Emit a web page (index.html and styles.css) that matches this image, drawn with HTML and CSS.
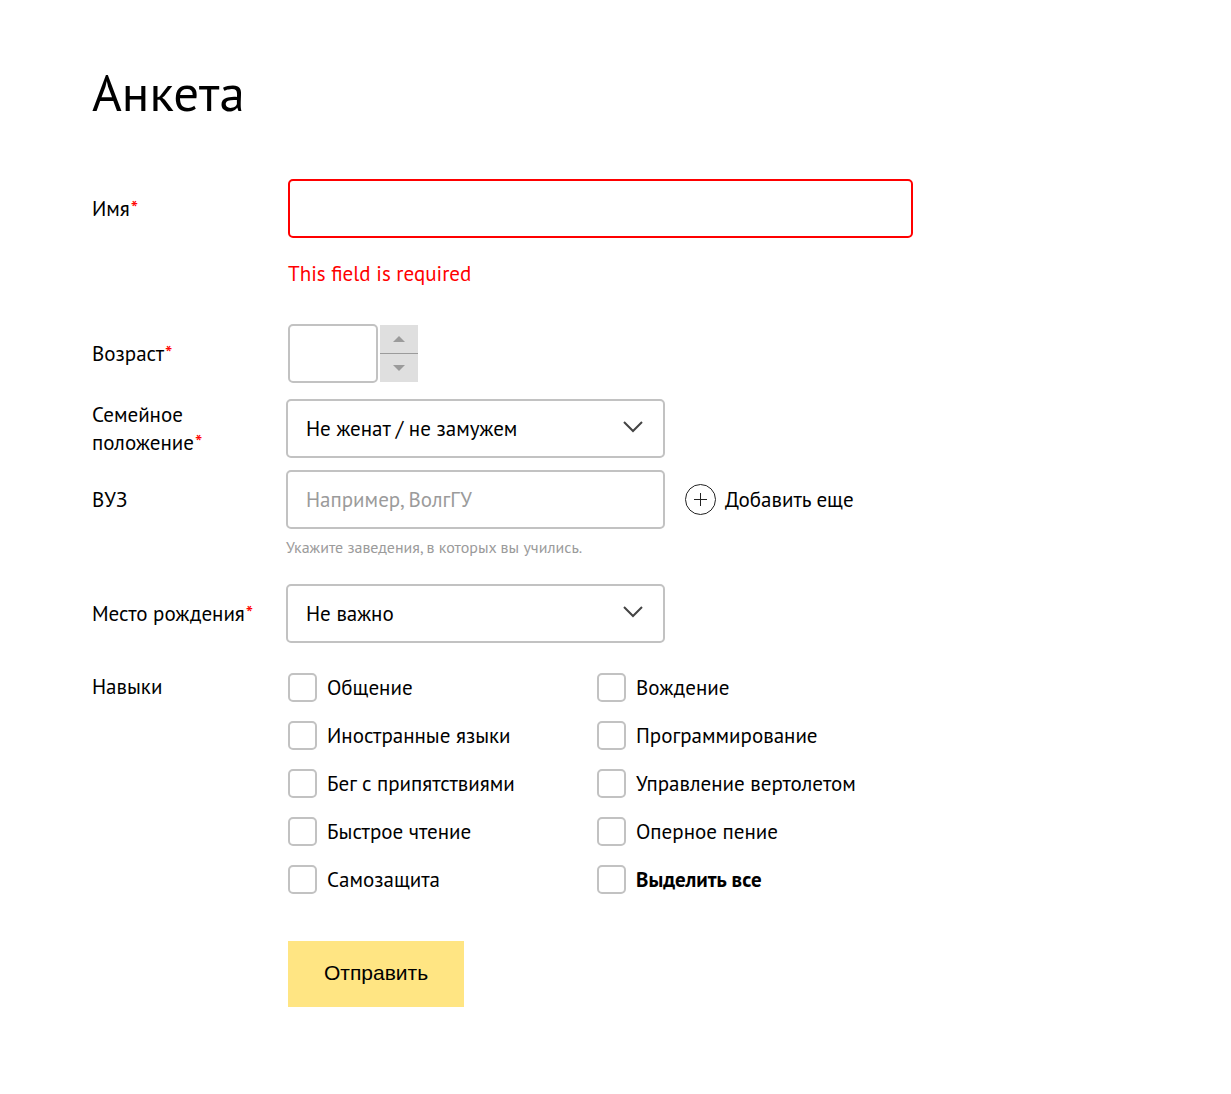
FILE: index.html
```html
<!DOCTYPE html>
<html lang="ru">
<head>
<meta charset="utf-8">
<meta name="viewport" content="width=device-width, initial-scale=1">
<title>Анкета</title>
<link rel="stylesheet" href="styles.css">
</head>
<body>
<main class="page">
  <h1 class="title">Анкета</h1>
  <form class="form" novalidate>
    <div class="row row-name">
      <label class="label" for="name">Имя<span class="required">*</span></label>
      <input class="control control-invalid" id="name" type="text" aria-describedby="name-error">
      <p class="error" id="name-error">This field is required</p>
    </div>

    <div class="row">
      <label class="label" for="age">Возраст<span class="required">*</span></label>
      <div class="stepper">
        <input class="control control-age" id="age" type="text" inputmode="numeric">
        <div class="stepper-buttons">
          <button class="step" type="button" aria-label="Увеличить"><svg class="step-icon" viewBox="0 0 12 6"><path d="M0 6L6 0L12 6Z"/></svg></button>
          <button class="step" type="button" aria-label="Уменьшить"><svg class="step-icon" viewBox="0 0 12 6"><path d="M0 0L6 6L12 0Z"/></svg></button>
        </div>
      </div>
    </div>

    <div class="row row-compact row-status">
      <label class="label" for="status">Семейное положение<span class="required">*</span></label>
      <div class="select">
        <select class="control" id="status"><option>Не женат / не замужем</option></select>
        <svg class="chevron" viewBox="0 0 20 12"><path d="M1 1L10 10L19 1"/></svg>
      </div>
    </div>

    <div class="row row-compact row-school">
      <label class="label" for="school">ВУЗ</label>
      <div class="school">
        <input class="control control-school" id="school" type="text" placeholder="Например, ВолгГУ" aria-describedby="school-hint">
        <button class="add" type="button">
          <svg class="add-icon" viewBox="0 0 31 31"><circle cx="15.5" cy="15.5" r="15"/><path d="M9 15.5H22M15.5 9V22"/></svg>
          <span>Добавить еще</span>
        </button>
      </div>
      <p class="hint" id="school-hint">Укажите заведения, в которых вы учились.</p>
    </div>

    <div class="row row-compact row-place">
      <label class="label" for="place">Место рождения<span class="required">*</span></label>
      <div class="select">
        <select class="control" id="place"><option>Не важно</option></select>
        <svg class="chevron" viewBox="0 0 20 12"><path d="M1 1L10 10L19 1"/></svg>
      </div>
    </div>

    <div class="row row-skills" role="group" aria-labelledby="skills">
      <span class="label" id="skills">Навыки</span>
      <div class="skills">
        <label class="skill"><input class="check" type="checkbox">Общение</label>
        <label class="skill"><input class="check" type="checkbox">Вождение</label>
        <label class="skill"><input class="check" type="checkbox">Иностранные языки</label>
        <label class="skill"><input class="check" type="checkbox">Программирование</label>
        <label class="skill"><input class="check" type="checkbox">Бег с припятствиями</label>
        <label class="skill"><input class="check" type="checkbox">Управление вертолетом</label>
        <label class="skill"><input class="check" type="checkbox">Быстрое чтение</label>
        <label class="skill"><input class="check" type="checkbox">Оперное пение</label>
        <label class="skill"><input class="check" type="checkbox">Самозащита</label>
        <label class="skill skill-all"><input class="check" type="checkbox">Выделить все</label>
      </div>
    </div>

    <div class="row">
      <button class="submit" type="submit">Отправить</button>
    </div>
  </form>
</main>
</body>
</html>
```
FILE: styles.css
```css
* {
  box-sizing: border-box;
}

body {
  margin: 0;
  background: #fff;
  color: #000;
  font-family: "PT Sans", "Noto Sans", sans-serif;
  font-size: 21px;
  line-height: 28px;
}

.page {
  max-width: 1100px;
  padding: 59px 92px 80px;
}

.title {
  margin: 0 0 54px;
  font-size: 51px;
  font-weight: 400;
  line-height: 66px;
}

.row {
  display: grid;
  grid-template-columns: 196px minmax(0, 1fr);
  align-items: center;
}

.row-compact {
  grid-template-columns: 194px minmax(0, 1fr);
}

.row-name {
  margin-bottom: 36px;
}

.row-status {
  margin: 16px 0 12px;
}

.row-school {
  margin-bottom: 24px;
}

.row-place {
  margin-bottom: 30px;
}

.row-skills {
  align-items: start;
  margin-bottom: 47px;
}

.required,
.error {
  color: #f00;
}

.required {
  margin-left: 1px;
}

.control {
  width: 100%;
  height: 59px;
  padding: 0 18px;
  border: 2px solid #c2c2c2;
  border-radius: 5px;
  background: #fff;
  color: #000;
  font: inherit;
  appearance: none;
}

.control::placeholder {
  color: #9b9b9b;
  opacity: 1;
}

.control-invalid {
  max-width: 625px;
  border-color: #f00;
}

.error,
.hint {
  grid-column: 2;
  margin: 0;
}

.error {
  padding-top: 22px;
}

.hint {
  padding: 6px 0 1px;
  color: #9b9b9b;
  font-size: 16px;
  line-height: 24px;
}

.stepper {
  display: flex;
  align-items: center;
  gap: 2px;
}

.control-age {
  width: 90px;
}

.stepper-buttons {
  display: grid;
  gap: 1px;
  width: 38px;
  background: #9b9b9b;
}

.step {
  display: grid;
  place-items: center;
  height: 28px;
  padding: 0;
  border: 0;
  background: #dfdfdf;
}

.step-icon {
  width: 12px;
  height: 6px;
  fill: #9b9b9b;
}

.select {
  display: grid;
  align-items: center;
  max-width: 379px;
}

.select > * {
  grid-area: 1 / 1;
}

.chevron {
  justify-self: end;
  width: 20px;
  height: 12px;
  margin: 0 22px 3px 0;
  fill: none;
  stroke: #444;
  stroke-width: 2;
  pointer-events: none;
}

.school {
  display: flex;
  align-items: center;
  gap: 20px;
}

.control-school {
  flex: 0 1 379px;
  min-width: 0;
}

.add {
  display: flex;
  flex: none;
  align-items: center;
  gap: 9px;
  padding: 0;
  border: 0;
  background: none;
  color: inherit;
  font: inherit;
}

.add-icon {
  width: 31px;
  height: 31px;
  fill: none;
  stroke: #222;
  stroke-width: 1;
}

.skills {
  display: grid;
  grid-template-columns: 309px minmax(0, 1fr);
  row-gap: 19px;
}

.skill {
  display: flex;
  align-items: center;
  gap: 10px;
}

.skill-all {
  font-weight: 700;
}

.check {
  flex: none;
  width: 29px;
  height: 29px;
  margin: 0;
  border: 2px solid #c2c2c2;
  border-radius: 5px;
  background: #fff;
  appearance: none;
}

.check:checked {
  background: #ffe583;
}

.submit {
  grid-column: 2;
  justify-self: start;
  padding: 18px 36px 20px;
  border: 0;
  background: #ffe583;
  color: #000;
  font-family: "Liberation Sans", Arial, sans-serif;
  font-size: 21px;
  line-height: 28px;
}
```
